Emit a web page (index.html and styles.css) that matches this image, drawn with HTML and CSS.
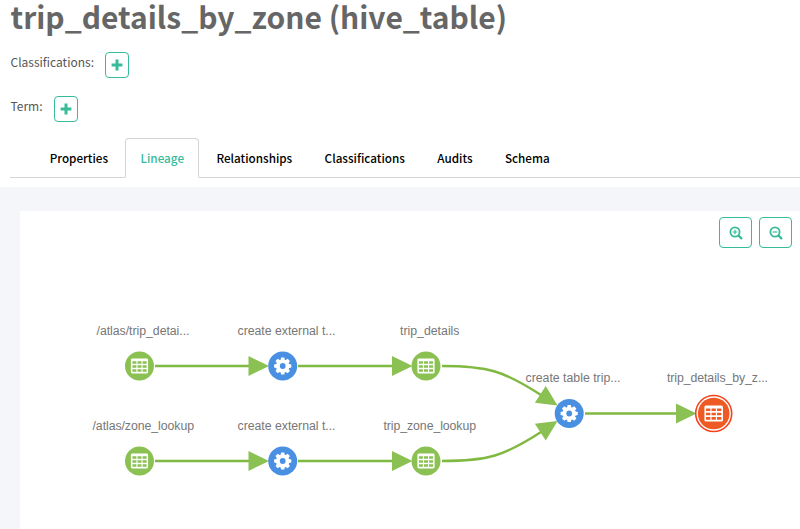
FILE: index.html
```
<!DOCTYPE html>
<html lang="en">
<head>
<meta charset="utf-8">
<title>trip_details_by_zone (hive_table)</title>
<link rel="stylesheet" href="styles.css">
</head>
<body>
<header class="entity">
  <h1>trip_details_by_zone (hive_table)</h1>
  <div class="field"><span class="label">Classifications:</span><button class="add" aria-label="Add classification"><svg width="12" height="12" viewBox="0 0 12 12"><path d="M6 .6v10.8M.6 6h10.8"/></svg></button></div>
  <div class="field term"><span class="label">Term:</span><button class="add" aria-label="Add term"><svg width="12" height="12" viewBox="0 0 12 12"><path d="M6 .6v10.8M.6 6h10.8"/></svg></button></div>
</header>
<nav class="tabs">
  <a class="tab">Properties</a>
  <a class="tab active">Lineage</a>
  <a class="tab">Relationships</a>
  <a class="tab">Classifications</a>
  <a class="tab">Audits</a>
  <a class="tab">Schema</a>
</nav>
<main class="content">
  <section class="panel">
    <div class="tools">
      <button class="zoom" aria-label="Zoom in"><svg width="14" height="14" viewBox="0 0 14 14"><circle cx="6" cy="6" r="4.6"/><path class="handle" d="M9.6 9.6l2.8 2.8"/><path class="sign" d="M3.7 6h4.6M6 3.7v4.6"/></svg></button>
      <button class="zoom" aria-label="Zoom out"><svg width="14" height="14" viewBox="0 0 14 14"><circle cx="6" cy="6" r="4.6"/><path class="handle" d="M9.6 9.6l2.8 2.8"/><path class="sign" d="M3.7 6h4.6"/></svg></button>
    </div>
    <svg class="graph" width="780" height="318" viewBox="20 211 780 318">
      <defs>
        <g id="table">
          <rect x="-8.6" y="-7.4" width="17.2" height="14.8" rx="1.4" fill="#fff"/>
          <path fill="currentColor" d="M-7.1-4.7h4v2.5h-4zM-2-4.7h4v2.5h-4zM3.1-4.7h4v2.5h-4zM-7.1-.8h4v2.5h-4zM-2-.8h4v2.5h-4zM3.1-.8h4v2.5h-4zM-7.1 3.2h4v2.5h-4zM-2 3.2h4v2.5h-4zM3.1 3.2h4v2.5h-4z"/>
        </g>
        <g id="data"><circle r="14.5" fill="currentColor"/><use href="#table"/></g>
        <path id="teeth" d="M-2.2-5.5L-1.6-8.6H1.6L2.2-5.5V5.5L1.6 8.6H-1.6L-2.2 5.5z"/>
        <g id="process">
          <circle r="14.5" fill="#4a90e2"/>
          <g fill="#fff">
            <circle r="6.6"/>
            <use href="#teeth"/>
            <use href="#teeth" transform="rotate(45)"/>
            <use href="#teeth" transform="rotate(90)"/>
            <use href="#teeth" transform="rotate(135)"/>
          </g>
          <circle r="2.9" fill="#4a90e2"/>
        </g>
        <path id="arrow" d="M-20.5-10L0 0-20.5 10z"/>
      </defs>
      <g class="edges">
        <path d="M155 366H255M298 366H398M155 461H255M298 461H398M585 413.5H680"/>
        <path d="M442 366C488 366 504 371 541 395"/>
        <path d="M442 461C488 461 504 456 541 432"/>
      </g>
      <g class="arrows">
        <use href="#arrow" x="269" y="366"/>
        <use href="#arrow" x="412.5" y="366"/>
        <use href="#arrow" x="269" y="461"/>
        <use href="#arrow" x="412.5" y="461"/>
        <use href="#arrow" x="696.5" y="413.5"/>
        <use href="#arrow" transform="translate(557.5 405.5) rotate(33)"/>
        <use href="#arrow" transform="translate(557.5 421) rotate(-33)"/>
      </g>
      <g class="data">
        <use href="#data" x="139.5" y="366"/>
        <use href="#data" x="426" y="366"/>
        <use href="#data" x="139.5" y="461"/>
        <use href="#data" x="426" y="461"/>
      </g>
      <use href="#process" x="282.7" y="366"/>
      <use href="#process" x="282.7" y="461"/>
      <use href="#process" x="569.2" y="413.5"/>
      <g class="current" transform="translate(713.7 413.5)">
        <circle class="ring" r="18"/>
        <circle r="15.8" fill="currentColor"/>
        <use href="#table" transform="scale(1.08)"/>
      </g>
      <g class="labels">
        <text x="96.5" y="335" textLength="93">/atlas/trip_detai...</text>
        <text x="237.5" y="335" textLength="98">create external t...</text>
        <text x="400" y="335" textLength="59.5">trip_details</text>
        <text x="92.5" y="430" textLength="101.5">/atlas/zone_lookup</text>
        <text x="237.5" y="430" textLength="98">create external t...</text>
        <text x="383.5" y="430" textLength="92.5">trip_zone_lookup</text>
        <text x="525.5" y="382" textLength="95">create table trip...</text>
        <text x="667" y="382" textLength="101">trip_details_by_z...</text>
      </g>
    </svg>
  </section>
</main>
</body>
</html>
```
FILE: styles.css
```
* { box-sizing: border-box; }
body {
  margin: 0;
  height: 529px;
  overflow: hidden;
  background: #fff;
  font-family: "Noto Sans CJK SC", "Open Sans", sans-serif;
  display: flex;
  flex-direction: column;
}
button { padding: 0; background: #fff; border: 1px solid #37bb9b; display: flex; align-items: center; justify-content: center; }
.entity { height: 138px; padding-left: 10.5px; flex: none; }
h1 { margin: 0; height: 51px; font-size: 30px; line-height: 33px; font-weight: 700; color: #666; white-space: nowrap; }
.field { display: flex; height: 44px; align-items: flex-start; }
.label { width: 94.5px; font-size: 12px; line-height: 22px; color: #555; white-space: nowrap; }
.term .label { width: 43px; }
.add { width: 24px; height: 26px; margin-top: 1px; border-radius: 4px; }
.add svg { stroke: #37bb9b; stroke-width: 3; }
.tabs { flex: none; display: flex; height: 40px; margin-left: 10px; padding-left: 24.7px; border-bottom: 1px solid #d5d5d5; }
.tab { height: 40px; padding: 0 14px; margin-right: 2.4px; border: 1px solid transparent; font-size: 11.7px; line-height: 38px; font-weight: 500; color: #000; white-space: nowrap; }
.active { background: #fff; border-color: #d5d5d5; border-bottom-color: #fff; border-radius: 4px 4px 0 0; color: #37bb9b; }
.content { flex: 1; margin-top: 9px; padding: 24px 0 0 20px; background: #f5f6fa; }
.panel { position: relative; height: 318px; background: #fff; }
.tools { position: absolute; right: 8px; top: 6px; display: flex; gap: 7px; }
.zoom { width: 33px; height: 31px; border-radius: 4px; }
.zoom svg { fill: none; stroke: #37bb9b; stroke-width: 1.8; }
.zoom .handle { stroke-width: 2.2; stroke-linecap: round; }
.zoom .sign { stroke-width: 1.2; }
.graph { display: block; }
.edges { fill: none; stroke: #80b941; stroke-width: 2.4; }
.arrows { fill: #8bc152; }
.data { color: #8bc152; }
.current { color: #ee5a24; }
.ring { fill: #fff; stroke: #f4431c; stroke-width: 1.6; }
.labels { fill: #777; font: 12.3px "Liberation Sans", Arial, sans-serif; }
```
